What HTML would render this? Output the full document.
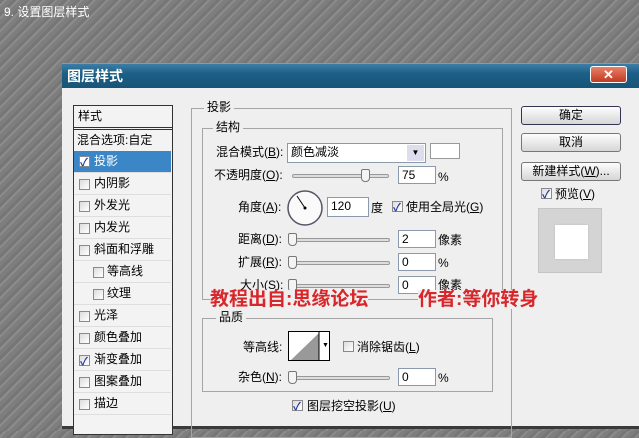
<!DOCTYPE html>
<html><head><meta charset="utf-8"><style>
*{margin:0;padding:0;box-sizing:border-box}
body{width:639px;height:431px;overflow:hidden;position:relative;font-family:"Liberation Sans","Noto Sans CJK SC",sans-serif;font-size:12px;color:#000;
background:repeating-linear-gradient(135deg,#767676 0 3px,#8c8c8c 3px 5px,#7e7e7e 5px 9px);}
.a{position:absolute;white-space:nowrap;line-height:1}
.dlg{position:absolute;left:62px;top:63px;width:590px;height:366px;background:#efefef;border-bottom:3px solid #3a3a3a}
.tb{position:absolute;left:62px;top:63px;width:580px;height:25px;background:linear-gradient(#3d7ea6,#1c5f86 40%,#185477);border-top:1px solid #6aa}
.box{position:absolute;border:1px solid #a5a5a5}
.inp{position:absolute;background:#fff;border:1px solid #8a9aaa;height:18px;padding:2px 3px;font-size:12px;line-height:13px}
.sl{position:absolute;height:4px;border:1px solid #999;background:#ddd;border-radius:2px}
.th{position:absolute;width:9px;height:13px;background:#f4f4f4;border:1px solid #777;border-radius:2px 2px 4px 4px}
.cb{position:absolute;width:11px;height:11px;border:1px solid #8a8a8a;background:linear-gradient(135deg,#ddd,#fff)}
.ck::after{content:"✓";position:absolute;left:0;top:-3px;font-size:11px;font-weight:bold;color:#2a3a9a}
.btn{position:absolute;left:521px;width:100px;height:19px;border:1px solid #777;border-radius:3px;background:linear-gradient(#fdfdfd,#d6d6d6);text-align:center;line-height:17px}
.it{position:absolute;left:74px;width:97px;height:22px;border-bottom:1px solid #dedede;line-height:21px}
.red{position:absolute;color:#d8262a;font-size:19px;font-weight:bold;line-height:1;white-space:nowrap;font-family:"Liberation Sans","Noto Sans CJK SC",sans-serif}
</style></head><body>
<div class="a" style="left:4px;top:6px;color:#fff;font-size:12px">9. 设置图层样式</div>
<div class="dlg"></div>
<div class="tb"></div>
<div class="a" style="left:67px;top:69px;color:#fff;font-weight:bold;font-size:14px">图层样式</div>
<div style="position:absolute;left:590px;top:66px;width:37px;height:17px;border-radius:3px;border:1px solid #fff;background:linear-gradient(#e8806a,#c13a20);color:#fff;text-align:center;font-weight:bold;font-size:13px;line-height:15px">✕</div>

<div style="position:absolute;left:73px;top:105px;width:100px;height:330px;border:1px solid #333;background:#f3f3f3"></div>
<div class="a" style="left:78px;top:110px">样式</div>
<div style="position:absolute;left:74px;top:127px;width:98px;height:3px;border-top:1px solid #333;border-bottom:1px solid #333"></div>
<div class="it" style="top:130px;padding-left:3px">混合选项:自定</div>
<div class="it" style="top:151px;background:#3a86c6;color:#fff;padding-left:20px">投影</div>
<div class="cb ck" style="left:79px;top:156px;background:#fff"></div>
<div class="it" style="top:173px;padding-left:20px">内阴影</div><div class="cb" style="left:79px;top:179px"></div>
<div class="it" style="top:195px;padding-left:20px">外发光</div><div class="cb" style="left:79px;top:201px"></div>
<div class="it" style="top:217px;padding-left:20px">内发光</div><div class="cb" style="left:79px;top:223px"></div>
<div class="it" style="top:239px;padding-left:20px">斜面和浮雕</div><div class="cb" style="left:79px;top:245px"></div>
<div class="it" style="top:261px;padding-left:33px">等高线</div><div class="cb" style="left:93px;top:267px"></div>
<div class="it" style="top:283px;padding-left:33px">纹理</div><div class="cb" style="left:93px;top:289px"></div>
<div class="it" style="top:305px;padding-left:20px">光泽</div><div class="cb" style="left:79px;top:311px"></div>
<div class="it" style="top:327px;padding-left:20px">颜色叠加</div><div class="cb" style="left:79px;top:333px"></div>
<div class="it" style="top:349px;padding-left:20px">渐变叠加</div><div class="cb ck" style="left:79px;top:355px"></div>
<div class="it" style="top:371px;padding-left:20px">图案叠加</div><div class="cb" style="left:79px;top:377px"></div>
<div class="it" style="top:393px;padding-left:20px">描边</div><div class="cb" style="left:79px;top:399px"></div>

<div class="box" style="left:191px;top:108px;width:321px;height:330px"></div>
<div class="a" style="left:204px;top:101px;background:#efefef;padding:0 3px">投影</div>
<div class="box" style="left:202px;top:128px;width:301px;height:172px"></div>
<div class="a" style="left:213px;top:121px;background:#efefef;padding:0 3px">结构</div>

<div class="a" style="left:216px;top:146px">混合模式(<u>B</u>):</div>
<div class="inp" style="left:287px;top:143px;width:139px;height:20px">颜色减淡</div>
<div style="position:absolute;left:407px;top:145px;width:17px;height:16px;background:#dde;text-align:center;font-size:8px;line-height:16px">▼</div>
<div style="position:absolute;left:430px;top:143px;width:30px;height:16px;background:#fff;border:1px solid #999"></div>

<div class="a" style="left:214px;top:169px">不透明度(<u>O</u>):</div>
<div class="sl" style="left:292px;top:174px;width:97px"></div><div class="th" style="left:361px;top:169px"></div>
<div class="inp" style="left:398px;top:166px;width:38px">75</div><div class="a" style="left:438px;top:171px">%</div>

<div class="a" style="left:238px;top:201px">角度(<u>A</u>):</div>
<svg style="position:absolute;left:286px;top:189px" width="38" height="38"><circle cx="19" cy="19" r="17" fill="#fafafa" stroke="#556" stroke-width="1.5"/><line x1="19" y1="19" x2="11" y2="7" stroke="#000"/><circle cx="19" cy="19" r="1.5"/></svg>
<div class="inp" style="left:327px;top:197px;width:42px;height:20px">120</div><div class="a" style="left:371px;top:202px">度</div>
<div class="cb ck" style="left:392px;top:201px"></div><div class="a" style="left:406px;top:201px">使用全局光(<u>G</u>)</div>

<div class="a" style="left:238px;top:233px">距离(<u>D</u>):</div>
<div class="sl" style="left:292px;top:238px;width:98px"></div><div class="th" style="left:288px;top:233px"></div>
<div class="inp" style="left:398px;top:230px;width:38px">2</div><div class="a" style="left:438px;top:234px">像素</div>
<div class="a" style="left:238px;top:256px">扩展(<u>R</u>):</div>
<div class="sl" style="left:292px;top:261px;width:98px"></div><div class="th" style="left:288px;top:256px"></div>
<div class="inp" style="left:398px;top:253px;width:38px">0</div><div class="a" style="left:438px;top:257px">%</div>
<div class="a" style="left:240px;top:279px">大小(<u>S</u>):</div>
<div class="sl" style="left:292px;top:284px;width:98px"></div><div class="th" style="left:288px;top:279px"></div>
<div class="inp" style="left:398px;top:276px;width:38px">0</div><div class="a" style="left:438px;top:279px">像素</div>

<div class="red" style="left:210px;top:290px;background:#efefef">教程出自:思缘论坛</div>
<div class="red" style="left:418px;top:290px;background:#efefef">作者:等你转身</div>

<div class="box" style="left:202px;top:318px;width:291px;height:74px"></div>
<div class="a" style="left:216px;top:311px;background:#efefef;padding:0 3px">品质</div>
<div class="a" style="left:243px;top:341px">等高线:</div>
<div style="position:absolute;left:288px;top:331px;width:42px;height:30px;border:1px solid #000;background:#fff;overflow:hidden">
<svg width="42" height="30"><polygon points="1,29 30,1 30,29" fill="#999"/><line x1="30" y1="0" x2="30" y2="30" stroke="#000"/><text x="33" y="15" font-size="7">▼</text></svg></div>
<div class="cb" style="left:343px;top:341px"></div><div class="a" style="left:357px;top:341px">消除锯齿(<u>L</u>)</div>
<div class="a" style="left:238px;top:371px">杂色(<u>N</u>):</div>
<div class="sl" style="left:292px;top:376px;width:98px"></div><div class="th" style="left:288px;top:371px"></div>
<div class="inp" style="left:398px;top:368px;width:38px">0</div><div class="a" style="left:438px;top:372px">%</div>
<div class="cb ck" style="left:292px;top:400px"></div><div class="a" style="left:307px;top:400px">图层挖空投影(<u>U</u>)</div>

<div class="btn" style="top:106px;border-color:#335">确定</div>
<div class="btn" style="top:133px">取消</div>
<div class="btn" style="top:162px">新建样式(<u>W</u>)...</div>
<div class="cb ck" style="left:541px;top:188px"></div><div class="a" style="left:555px;top:188px">预览(<u>V</u>)</div>
<div style="position:absolute;left:538px;top:208px;width:64px;height:65px;background:#d4d4d4;border:1px solid #c4c4c4"></div>
<div style="position:absolute;left:555px;top:225px;width:33px;height:34px;background:#fff;box-shadow:0 0 2px #bbb"></div>
</body></html>
